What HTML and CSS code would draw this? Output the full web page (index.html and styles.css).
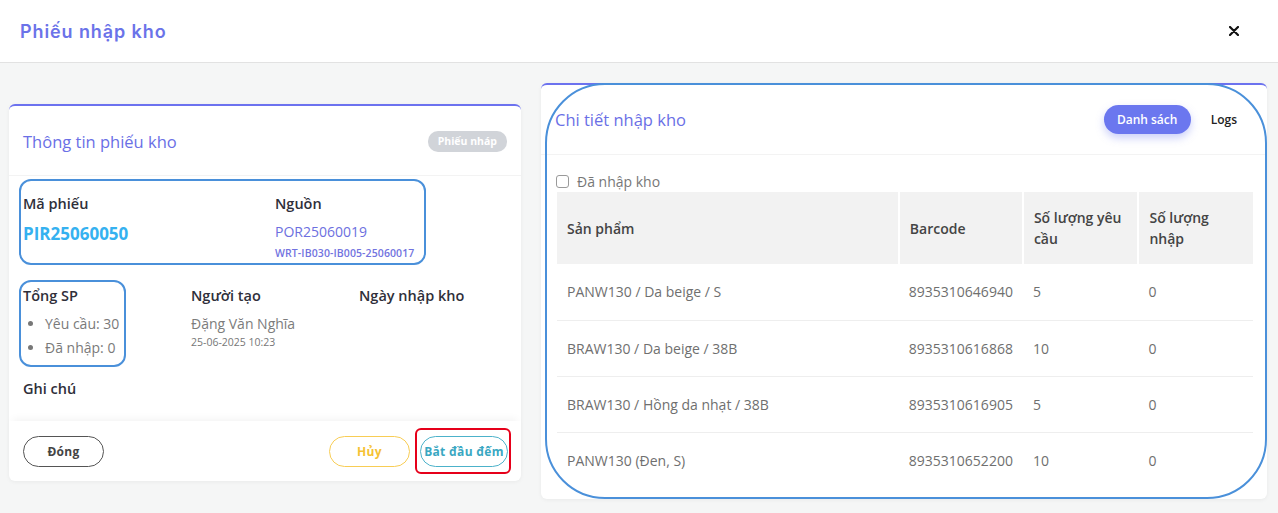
FILE: index.html
```html
<!DOCTYPE html>
<html lang="vi">
<head>
<meta charset="utf-8">
<title>Phiếu nhập kho</title>
<link rel="stylesheet" href="styles.css">
</head>
<body>
<div class="modal">
  <header class="modal-header">
    <h1 class="modal-title">Phiếu nhập kho</h1>
    <button class="close-btn" aria-label="Đóng">
      <svg width="10" height="10" viewBox="0 0 10 10"><path d="M1 1L9 9M9 1L1 9" stroke="#111" stroke-width="2.2" stroke-linecap="round"/></svg>
    </button>
  </header>
  <main class="modal-body">
    <section class="card card-left">
      <div class="card-head">
        <h2 class="card-title">Thông tin phiếu kho</h2>
        <span class="badge">Phiếu nháp</span>
      </div>
      <div class="info">
        <div class="row row-2">
          <div class="field">
            <div class="label">Mã phiếu</div>
            <div class="code">PIR25060050</div>
          </div>
          <div class="field">
            <div class="label">Nguồn</div>
            <div class="source">POR25060019</div>
            <div class="source-sub">WRT-IB030-IB005-25060017</div>
          </div>
        </div>
        <div class="row row-3">
          <div class="field">
            <div class="label">Tổng SP</div>
            <ul class="list">
              <li>Yêu cầu: 30</li>
              <li>Đã nhập: 0</li>
            </ul>
          </div>
          <div class="field">
            <div class="label">Người tạo</div>
            <div class="value">Đặng Văn Nghĩa</div>
            <div class="value-sub">25-06-2025 10:23</div>
          </div>
          <div class="field">
            <div class="label">Ngày nhập kho</div>
          </div>
        </div>
        <div class="field note">
          <div class="label">Ghi chú</div>
        </div>
        <div class="mark mark-code"></div>
        <div class="mark mark-total"></div>
      </div>
      <div class="card-foot">
        <button class="btn btn-dark">Đóng</button>
        <div class="foot-right">
          <button class="btn btn-warn">Hủy</button>
          <button class="btn btn-info">Bắt đầu đếm</button>
          <div class="mark-red"></div>
        </div>
      </div>
    </section>

    <section class="card card-right">
      <div class="card-head">
        <h2 class="card-title">Chi tiết nhập kho</h2>
        <div class="tabs">
          <button class="tab tab-active">Danh sách</button>
          <button class="tab">Logs</button>
        </div>
      </div>
      <div class="detail">
        <label class="check"><span class="box"></span>Đã nhập kho</label>
        <table class="table">
          <thead>
            <tr>
              <th class="c1">Sản phẩm</th>
              <th class="c2">Barcode</th>
              <th class="c3">Số lượng yêu cầu</th>
              <th class="c4">Số lượng nhập</th>
            </tr>
          </thead>
          <tbody>
            <tr><td>PANW130 / Da beige / S</td><td>8935310646940</td><td>5</td><td>0</td></tr>
            <tr><td>BRAW130 / Da beige / 38B</td><td>8935310616868</td><td>10</td><td>0</td></tr>
            <tr><td>BRAW130 / Hồng da nhạt / 38B</td><td>8935310616905</td><td>5</td><td>0</td></tr>
            <tr><td>PANW130 (Đen, S)</td><td>8935310652200</td><td>10</td><td>0</td></tr>
          </tbody>
        </table>
      </div>
      <div class="mark mark-right"></div>
    </section>
  </main>
</div>
</body>
</html>
```

FILE: styles.css
```css
* { box-sizing: border-box; }
html, body { margin: 0; padding: 0; }
body {
  width: 1278px;
  height: 513px;
  overflow: hidden;
  font-family: "Open Sans", "Noto Sans", sans-serif;
  color: #333;
  background: #f5f6f6;
}
button { font-family: inherit; cursor: pointer; }
.modal { height: 513px; display: flex; flex-direction: column; }
.modal-header {
  height: 63px;
  background: #fff;
  border-bottom: 1px solid #e2e2e2;
  display: flex;
  align-items: center;
  justify-content: space-between;
  padding: 0 39px 0 20px;
}
.modal-title {
  margin: 0;
  font-family: "Inter", sans-serif;
  font-size: 18px;
  font-weight: 600;
  letter-spacing: 0.9px;
  color: #6b73e9;
}
.close-btn {
  border: 0;
  background: none;
  padding: 0;
  width: 10px;
  height: 10px;
  display: flex;
}
.modal-body {
  flex: 1;
  display: flex;
  align-items: flex-start;
  gap: 20px;
  padding: 20px 11px 0 9px;
}
.card {
  position: relative;
  background: #fff;
  border-top: 2px solid #6c72ef;
  border-radius: 6px;
  box-shadow: 0 1px 4px rgba(0,0,0,0.05);
}
.card-left { width: 512px; margin-top: 21px; }
.card-right { width: 726px; }
.card-head {
  height: 70px;
  display: flex;
  align-items: center;
  justify-content: space-between;
  border-bottom: 1px solid #f3f3f3;
  padding: 0 14px;
}
.card-title {
  margin: 0;
  font-size: 16.5px;
  font-weight: 500;
  color: #6a6fe6;
}
.card-left .card-title { margin-top: 2px; }
.badge {
  background: #d1d4d9;
  color: #fff;
  font-size: 10.5px;
  font-weight: 700;
  padding: 3px 10px 4px;
  border-radius: 10px;
  margin-top: 1px;
}
.info { position: relative; padding: 18px 14px 0; }
.row { display: grid; }
.row-2 { grid-template-columns: 252px 1fr; height: 92px; }
.row-3 { grid-template-columns: 168px 168px 1fr; height: 93px; }
.label { font-size: 14.5px; font-weight: 600; color: #2f2f3a; line-height: 20px; }
.code { font-size: 17px; font-weight: 700; color: #35b1f0; margin-top: 8px; line-height: 24px; }
.source { font-size: 14px; color: #6d6fe0; margin-top: 8px; line-height: 20px; }
.source-sub { font-size: 10.5px; font-weight: 600; color: #7273e0; margin-top: 3px; line-height: 16px; letter-spacing: 0.1px; }
.list { margin: 6px 0 0; padding: 0 0 0 22px; color: #7a7a7a; font-size: 14px; line-height: 24px; }
.list li::marker { color: #777; }
.value { font-size: 14px; color: #7c7c7c; margin-top: 8px; line-height: 20px; }
.value-sub { font-size: 10.5px; color: #777; line-height: 16px; }
.note { height: 42px; }
.mark {
  position: absolute;
  border: 2px solid #4a90da;
  pointer-events: none;
}
.mark-code { left: 10px; top: 3px; width: 407px; height: 86px; border-radius: 12px; }
.mark-total { left: 10px; top: 104px; width: 107px; height: 87px; border-radius: 12px; }
.card-foot {
  position: relative;
  height: 60px;
  display: flex;
  align-items: center;
  justify-content: space-between;
  padding: 0 13px 0 14px;
  box-shadow: 0 -6px 8px -4px rgba(0,0,0,0.05);
}
.foot-right { position: relative; display: flex; gap: 10px; }
.btn {
  height: 31px;
  border-radius: 16px;
  background: #fff;
  font-size: 12px;
  font-weight: 700;
  letter-spacing: 0.3px;
}
.btn-dark { width: 81px; border: 1px solid #555; color: #444; }
.btn-warn { width: 81px; border: 1px solid #f8cd55; color: #f5c233; }
.btn-info { width: 88px; border: 1px solid #4cb2ca; color: #39a7c2; padding: 0; }
.mark-red {
  position: absolute;
  right: -3px;
  top: -8px;
  width: 96px;
  height: 46px;
  border: 2px solid #e6001a;
  border-radius: 6px;
}
.tabs { display: flex; align-items: center; gap: 8px; margin-right: 4px; margin-top: -1px; }
.tab {
  height: 29px;
  border: 0;
  background: none;
  font-size: 12px;
  font-weight: 600;
  color: #222;
  padding: 0 12px;
  border-radius: 15px;
}
.tab-active {
  width: 87px;
  background: #6b77ef;
  color: #fff;
  box-shadow: 0 4px 8px rgba(107,119,239,0.35);
}
.detail { padding: 15px 14px 11px 16px; }
.check {
  display: flex;
  align-items: center;
  gap: 8px;
  font-size: 14px;
  color: #777;
  height: 22px;
  margin-left: -1px;
}
.box {
  width: 13px;
  height: 13px;
  border: 1px solid #9a9a9a;
  border-radius: 3px;
  background: #fff;
}
.table {
  width: 696px;
  border-collapse: collapse;
  font-size: 14px;
}
.table th {
  background: #f2f2f2;
  height: 72px;
  text-align: left;
  font-weight: 600;
  color: #444;
  padding: 0 10px;
  line-height: 21px;
  border-right: 2px solid #fff;
}
.table th:last-child { border-right: 0; }
.c1 { width: 344px; }
.c2 { width: 121px; }
.c3 { width: 116px; }
.c4 { width: 115px; }
.table td {
  height: 56px;
  padding: 0 10px;
  color: #6f6f6f;
  border-bottom: 1px solid #eeeeee;
}
.table tr:last-child td { border-bottom: 0; }
.mark-right { left: 4px; top: -2px; width: 722px; height: 416px; border-radius: 60px; }
```
